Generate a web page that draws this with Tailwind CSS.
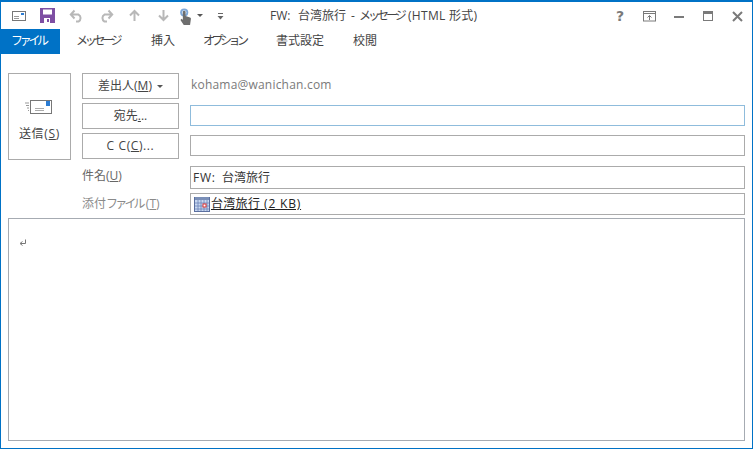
<!DOCTYPE html>
<html lang="ja"><head><meta charset="utf-8">
<script src="https://cdn.jsdelivr.net/npm/@tailwindcss/browser@4"></script>
</head>
<body class="m-0 overflow-hidden bg-white">
<div class="w-[753px] h-[449px] border border-[#0072c6] border-t-2 flex flex-col bg-white text-[12px] leading-[16px] text-[#444] font-['Open_Sans','Noto_Sans_CJK_JP',sans-serif] overflow-hidden">
  <!-- title bar -->
  <div class="h-[27px] relative flex items-center pl-[10px] shrink-0">
    <div class="flex items-center">
      <svg width="16" height="12" viewBox="0 0 16 12" class="mr-[13px] mt-[1px]"><rect x="1.500" y="1.500" width="13" height="9" fill="#fff" stroke="#777"/><rect x="10" y="3" width="3" height="2" fill="#2b7cd3"/><path d="M3 6.500h5M3 8.500h5" stroke="#999"/></svg>
      <svg width="15" height="15" viewBox="0 0 15 15" class="mr-[14px]"><path d="M0 0H15V15H0Z" fill="#7e4fa3"/><rect x="3" y="1.500" width="9" height="5" fill="#fff"/><rect x="4" y="10" width="6" height="5" fill="#fff"/><rect x="7" y="11" width="2" height="3" fill="#7e4fa3"/></svg>
      <svg width="16" height="14" viewBox="0 0 16 14" class="mr-[13px]"><path d="M2 5.500H9.500A4 4 0 0 1 9.500 12.500H7M5.500 1.500L1.800 5.500L5.500 9.500" fill="none" stroke="#b8b8b8" stroke-width="2"/></svg>
      <svg width="16" height="14" viewBox="0 0 16 14" class="mr-[15px]"><path d="M14 5.500H6.500A4 4 0 0 0 6.500 12.500H9M10.500 1.500L14.200 5.500L10.500 9.500" fill="none" stroke="#b8b8b8" stroke-width="2"/></svg>
      <svg width="11" height="13" viewBox="0 0 11 13" class="mr-[18px]"><path d="M5.500 12V2M1 6.500L5.500 2L10 6.500" fill="none" stroke="#b8b8b8" stroke-width="2"/></svg>
      <svg width="11" height="13" viewBox="0 0 11 13" class="mr-[10px]"><path d="M5.500 1V11M1 6.500L5.500 11L10 6.500" fill="none" stroke="#b8b8b8" stroke-width="2"/></svg>
      <svg width="14" height="18" viewBox="0 0 15 20" class="mr-[4px] mt-[3px]"><circle cx="5.500" cy="5" r="4.500" fill="#7fa8d8"/><circle cx="5.500" cy="5" r="2.500" fill="#dce8f6"/><path d="M4 4.500a1.500 1.500 0 0 1 3 0V9l5 1.500a1.500 1.500 0 0 1 1 1.500L12 19H5L1.500 13.500L2 12L4 13Z" fill="#6e6e6e"/></svg>
      <svg width="6" height="3" viewBox="0 0 6 3" class="mr-[14px]"><path d="M0 0H6L3 3Z" fill="#555"/></svg>
      <svg width="7" height="7" viewBox="0 0 7 7" class="mt-[2px]"><path d="M1 0.500H6" stroke="#666"/><path d="M0.500 3H6.500L3.500 6.500Z" fill="#666"/></svg>
    </div>
    <div class="absolute left-[269px] top-[6px] text-[12px] text-[#444] whitespace-nowrap flex">
      <span class="w-[28px]">FW:</span><span class="w-[53px]">台湾旅行</span><span class="w-[8px]">-</span><span class="w-[49px] tracking-[-3px]">メッセージ</span><span class="tracking-[0.300px]">(HTML 形式)</span>
    </div>
    <div class="absolute right-[9px] top-[6px] h-[16px] flex items-center">
      <span class="font-bold text-[14px] leading-[16px] w-[9px] mr-[18px] text-[#7a7a7a] font-['DejaVu_Sans',sans-serif]">?</span>
      <svg width="14" height="11" viewBox="0 0 14 11" class="mr-[17px]"><rect x="0.500" y="0.500" width="12" height="9.500" fill="none" stroke="#7a7a7a"/><path d="M1 2.500H12" stroke="#7a7a7a"/><path d="M6.500 9V4.500M4.500 6.500L6.500 4.500L8.500 6.500" fill="none" stroke="#7a7a7a"/></svg>
      <svg width="10" height="3" viewBox="0 0 10 3" class="mr-[19px] mt-[2px]"><rect width="10" height="2" fill="#7a7a7a"/></svg>
      <svg width="10" height="10" viewBox="0 0 10 10" class="mr-[19px]"><rect x="0.500" y="0.500" width="9" height="9" fill="none" stroke="#7a7a7a"/><rect width="10" height="3" fill="#7a7a7a"/></svg>
      <svg width="11" height="11" viewBox="0 0 11 11"><path d="M1 1L10 10M10 1L1 10" stroke="#7a7a7a" stroke-width="2"/></svg>
    </div>
  </div>
  <!-- tabs -->
  <div class="h-[25px] flex items-stretch shrink-0 text-[12px] text-[#444]">
    <div class="w-[59px] bg-[#0072c6] text-white flex items-center pl-[10px] tracking-[-3.300px] whitespace-nowrap pb-[1px]">ファイル</div>
    <div class="w-[79px] flex items-center pl-[16px] whitespace-nowrap tracking-[-3.300px] pb-[1px]">メッセージ</div>
    <div class="w-[52px] flex items-center pl-[12px] pb-[1px]">挿入</div>
    <div class="w-[72px] flex items-center pl-[12px] whitespace-nowrap tracking-[-3.500px] pb-[1px]">オプション</div>
    <div class="w-[77px] flex items-center pl-[13px] pb-[1px]">書式設定</div>
    <div class="flex items-center pl-[13px] pb-[1px]">校閲</div>
  </div>
  <!-- header -->
  <div class="pl-[7px] pr-[7px] pt-[19px] flex flex-col shrink-0">
    <div class="flex">
      <div class="w-[63px] h-[87px] border border-[#ababab] flex flex-col items-center mr-[11px] shrink-0">
        <svg width="29" height="16" viewBox="0 0 29 16" class="mt-[25px] mr-[3px]"><path d="M1 4H5M2 6.500H5M3 9H5M4 11.500H5" stroke="#999"/><rect x="6.500" y="1.500" width="21" height="13" fill="#fff" stroke="#777"/><rect x="22" y="2" width="4" height="5" fill="#2b7cd3"/><path d="M11 9.500H20M11 11.500H20" stroke="#aaa"/></svg>
        <div class="mt-[11px] text-[12px] text-[#444] whitespace-nowrap tracking-[0.700px]">送信(<u>S</u>)</div>
      </div>
      <div class="flex flex-col gap-[4px] w-[97px] mr-[11px] shrink-0">
        <div class="h-[26px] border border-[#ababab] flex items-center justify-center whitespace-nowrap">差出人(<u>M</u>)<svg width="6" height="3" viewBox="0 0 6 3" class="ml-[5px]"><path d="M0 0H6L3 3Z" fill="#555"/></svg></div>
        <div class="h-[26px] border border-[#ababab] flex items-center justify-center">宛先<u>.</u>..</div>
        <div class="h-[26px] border border-[#ababab] flex items-center justify-center whitespace-nowrap tracking-[0.600px]">C C(<u>C</u>)...</div>
      </div>
      <div class="flex-1 flex flex-col">
        <div class="h-[26px] flex items-center pl-[1px] text-[#7a7a7a] tracking-[0.200px] pb-[2px]">kohama@wanichan.com</div>
        <div class="mt-[6px] h-[21px] border border-[#8fbcdc]"></div>
        <div class="mt-[9px] h-[21px] border border-[#ababab]"></div>
      </div>
    </div>
    <div class="flex mt-[6px]">
      <div class="w-[74px] shrink-0"></div>
      <div class="w-[108px] shrink-0 flex items-center pb-[3px] text-[#666] whitespace-nowrap">件名(<u>U</u>)</div>
      <div class="flex-1 h-[23px] border border-[#ababab] flex items-center pl-[2px] text-[#333]"><span class="w-[29px] tracking-[0.800px]">FW:</span><span>台湾旅行</span></div>
    </div>
    <div class="flex mt-[4px]">
      <div class="w-[74px] shrink-0"></div>
      <div class="w-[108px] shrink-0 flex items-center pb-[1px] text-[#8a8a8a] whitespace-nowrap">添付<span class="tracking-[-2.800px] pr-[3px]">ファイル</span>(<u>T</u>)</div>
      <div class="flex-1 h-[22px] border border-[#ababab] flex items-center pl-[3px] text-[#222]">
        <svg width="16" height="16" viewBox="0 0 16 16" class="mr-[1px] shrink-0"><rect x="0.500" y="1.500" width="15" height="14" fill="#c8d8f0" stroke="#5a6f9f"/><rect x="1" y="1" width="14" height="3" fill="#7a8fb8"/><path d="M4 4V15M7 4V15M10 4V15M13 4V15M1 7H15M1 10H15M1 13H15" stroke="#6a84b8" stroke-width="0.800"/><rect x="9" y="8" width="3" height="3" fill="#fff" stroke="#d33"/></svg>
        <u class="tracking-[0.300px]">台湾旅行<span class="tracking-[0.800px]"> (2 KB)</span></u>
      </div>
    </div>
  </div>
  <!-- body -->
  <div class="mx-[7px] mt-[3px] h-[223px] border border-[#a6abb2] relative shrink-0">
    <svg width="8" height="8" viewBox="0 0 8 8" class="absolute left-[10px] top-[20px]"><path d="M6.500 0.500V4.500H1.500M3.500 2.500L1 4.500L3.500 6.500" fill="none" stroke="#777"/></svg>
  </div>
</div>
</body></html>
